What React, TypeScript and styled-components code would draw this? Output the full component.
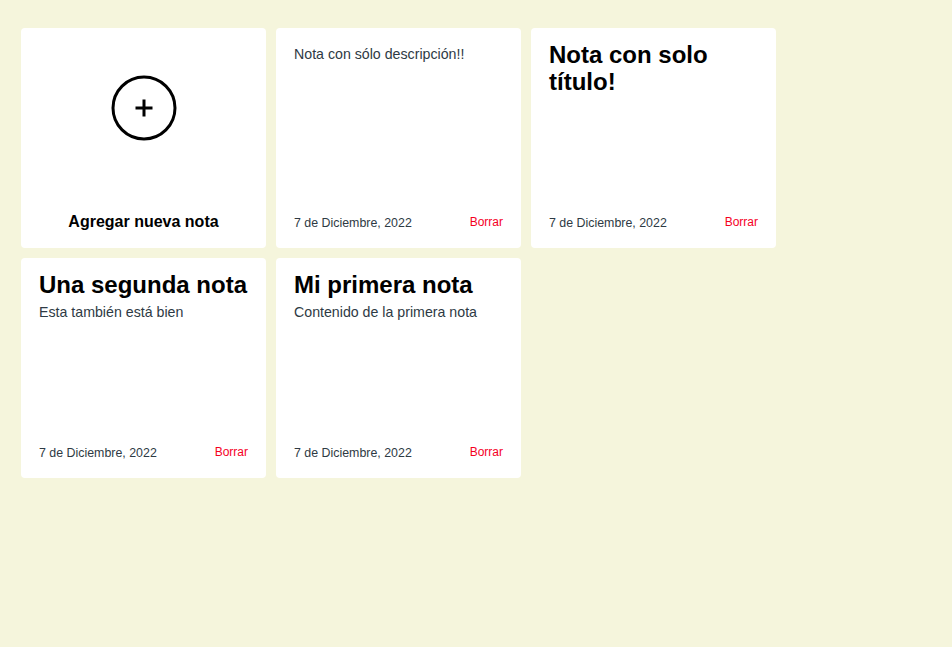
import React, { FC } from 'react';
import styled, { createGlobalStyle } from 'styled-components';

interface Note {
  id: number;
  title?: string;
  body?: string;
  date: string;
}

const notes: Note[] = [
  { id: 1, body: 'Nota con sólo descripción!!', date: '7 de Diciembre, 2022' },
  { id: 2, title: 'Nota con solo título!', date: '7 de Diciembre, 2022' },
  { id: 3, title: 'Una segunda nota', body: 'Esta también está bien', date: '7 de Diciembre, 2022' },
  { id: 4, title: 'Mi primera nota', body: 'Contenido de la primera nota', date: '7 de Diciembre, 2022' },
];

const GlobalStyle = createGlobalStyle`
  html, body {
    margin: 0;
    padding: 0;
    background-color: #f5f5dc;
    font-family: "Liberation Sans", Arial, sans-serif;
  }
`;

const Page = styled.main`
  min-height: 100vh;
  box-sizing: border-box;
  padding: 28px 21px;
`;

const Grid = styled.div`
  display: grid;
  grid-template-columns: repeat(3, 245px);
  grid-auto-rows: 220px;
  gap: 10px;
`;

const Card = styled.div`
  background-color: #fff;
  border-radius: 4px;
  padding: 14px 18px 18px;
  box-sizing: border-box;
  display: flex;
  flex-direction: column;
  justify-content: space-between;
`;

const AddCard = styled(Card)`
  align-items: center;
  padding: 47px 18px 17px;
  cursor: pointer;
`;

const AddLabel = styled.span`
  font-size: 16px;
  font-weight: 700;
  color: #000;
`;

const Content = styled.div`
  display: flex;
  flex-direction: column;
`;

const Title = styled.h2`
  margin: -1px 0 0;
  font-size: 24px;
  font-weight: 700;
  line-height: 27px;
  color: #000;
`;

const Body = styled.p`
  margin: 5px 0 0;
  font-size: 14.2px;
  line-height: 18px;
  color: #2e3a44;
  &:first-child {
    margin-top: 3px;
  }
`;

const Footer = styled.div`
  display: flex;
  justify-content: space-between;
  align-items: center;
  font-size: 12.4px;
  color: #2e3a44;
`;

const DeleteButton = styled.button`
  border: none;
  background: none;
  padding: 0;
  font: inherit;
  font-size: 12px;
  line-height: 12px;
  margin-bottom: 2px;
  color: #f5001f;
  cursor: pointer;
`;

const PlusIcon: FC = () => (
  <svg width="66" height="66" viewBox="0 0 66 66" fill="none">
    <circle cx="33" cy="33" r="31" stroke="#000" strokeWidth="3" />
    <path d="M24.5 33h17M33 24.5v17" stroke="#000" strokeWidth="3" />
  </svg>
);

const NoteCard: FC<{ note: Note }> = ({ note }) => (
  <Card>
    <Content>
      {note.title && <Title>{note.title}</Title>}
      {note.body && <Body>{note.body}</Body>}
    </Content>
    <Footer>
      <span>{note.date}</span>
      <DeleteButton>Borrar</DeleteButton>
    </Footer>
  </Card>
);

export default function App() {
  return (
    <Page>
      <GlobalStyle />
      <Grid>
        <AddCard>
          <PlusIcon />
          <AddLabel>Agregar nueva nota</AddLabel>
        </AddCard>
        {notes.map((n) => (
          <NoteCard key={n.id} note={n} />
        ))}
      </Grid>
    </Page>
  );
}
